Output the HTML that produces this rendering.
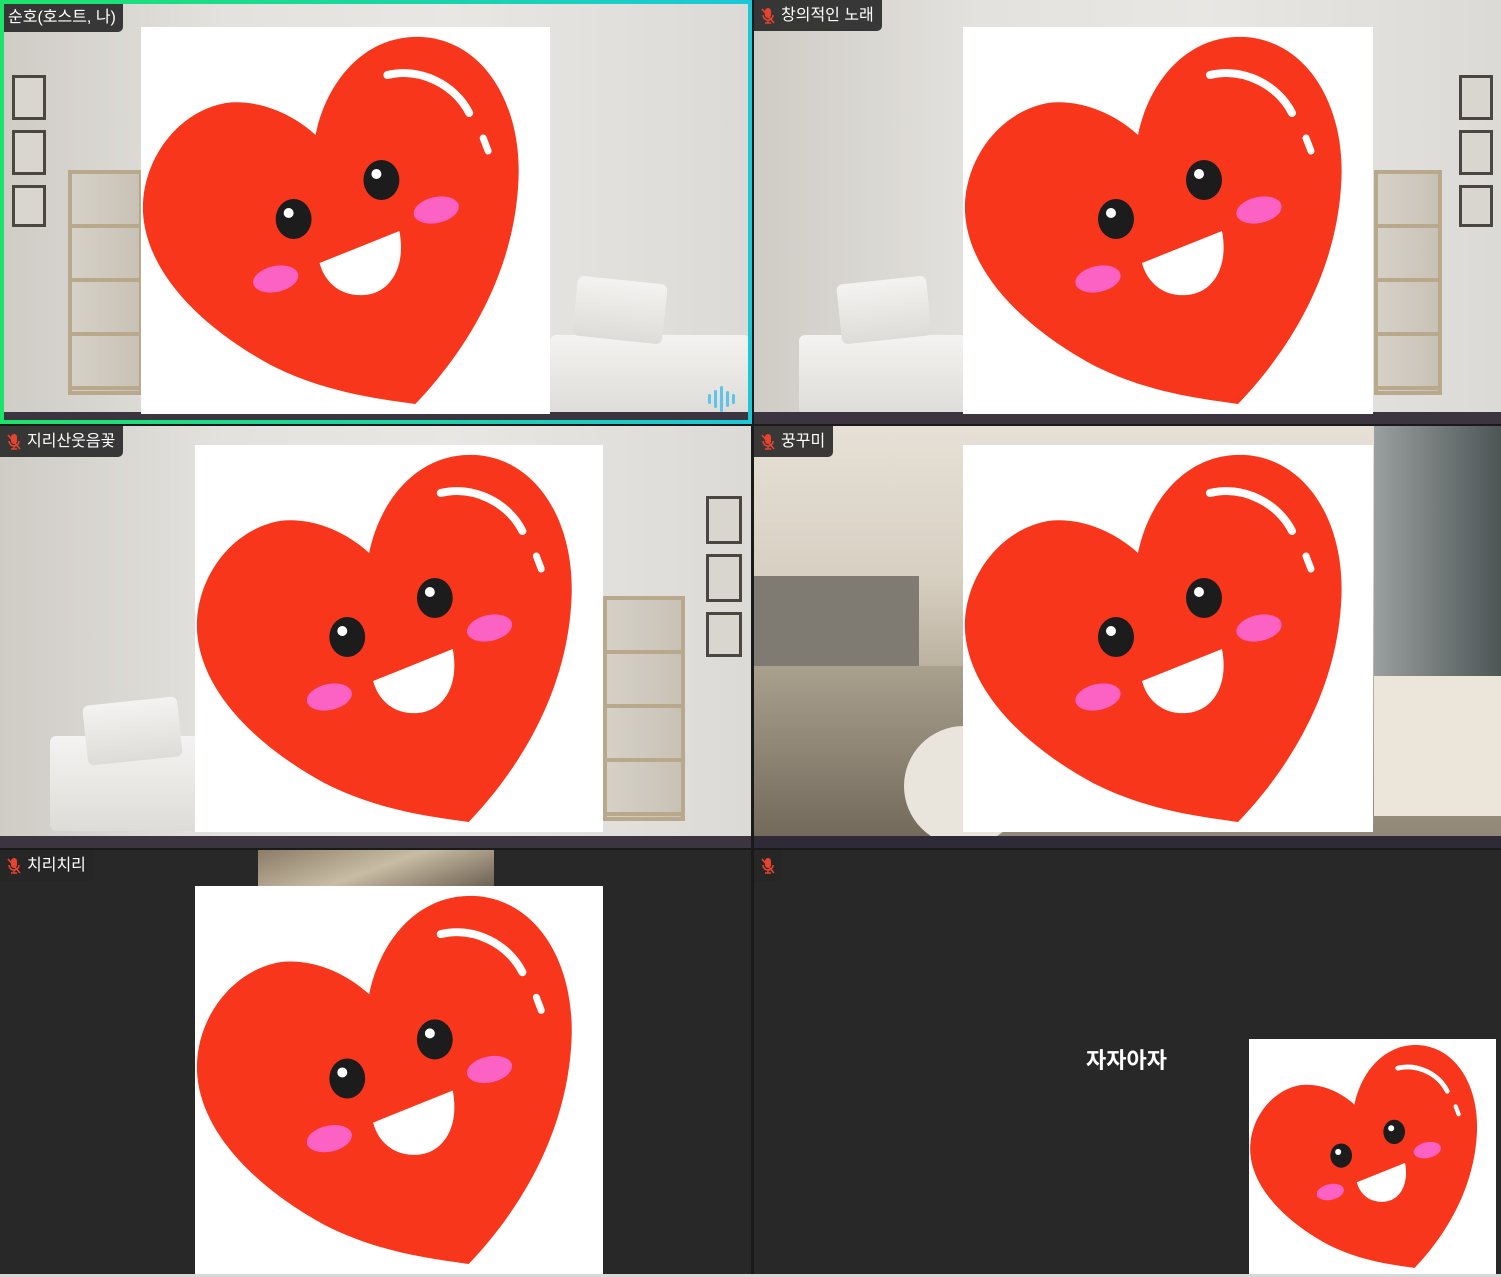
<!DOCTYPE html>
<html><head><meta charset="utf-8">
<style>
*{margin:0;padding:0;box-sizing:border-box}
body{width:1501px;height:1277px;background:#1a1a1a;position:relative;overflow:hidden;font-family:"Liberation Sans","Noto Sans CJK KR",sans-serif}
.t{position:absolute;overflow:hidden}
.room{background:linear-gradient(90deg,#cfccc6 0%,#e4e2de 30%,#e8e7e4 60%,#dcdad6 100%)}
.dark{background:#282828}
.lbl{position:absolute;left:0;top:0;height:31px;background:rgba(38,38,38,.9);color:#fff;font-size:16px;line-height:31px;padding:0 8px 0 6px;border-bottom-right-radius:5px;z-index:5;display:flex;align-items:center;gap:5px;white-space:nowrap}
.hb{position:absolute;background:#fff;z-index:3}
.hb svg{display:block;width:100%;height:100%}
.sofa{position:absolute;background:linear-gradient(180deg,#f4f3f1,#dedcd8);border-radius:6px;z-index:1}
.shelf{position:absolute;border:4px solid #b9a98c;background:repeating-linear-gradient(180deg,transparent 0 50px,#b9a98c 50px 54px),linear-gradient(90deg,#d6d1c8,#c8c2b6);z-index:1}
.fr{position:absolute;border:3px solid #4b4640;background:#d9d6d0;z-index:1}
.floor{position:absolute;left:0;right:0;bottom:0;height:12px;background:#3c3540;z-index:1}
</style></head><body>

<!-- tile 1 -->
<div class="t room" style="left:0;top:0;width:752px;height:424px">
 <div class="fr" style="left:12px;top:75px;width:34px;height:45px"></div>
 <div class="fr" style="left:12px;top:130px;width:34px;height:45px"></div>
 <div class="fr" style="left:12px;top:185px;width:34px;height:42px"></div>
 <div class="shelf" style="left:68px;top:170px;width:75px;height:225px"></div>
 <div class="sofa" style="left:550px;top:335px;width:200px;height:80px"></div>
 <div class="sofa" style="left:575px;top:280px;width:90px;height:60px;transform:rotate(6deg)"></div>
 <div class="floor"></div>
</div>
<div style="position:absolute;left:0;top:0;width:752px;height:424px;border:4px solid;border-image:linear-gradient(90deg,#1de36a,#1cc8d8) 1;z-index:6"></div>
<div class="lbl" style="left:4px;top:4px;height:28px;line-height:28px;padding:0 7px 0 4px">순호(호스트, 나)</div>
<div style="position:absolute;left:708px;top:386px;z-index:7;display:flex;gap:3px;align-items:center">
<i style="width:3px;height:10px;background:#5ec4e8;border-radius:2px"></i><i style="width:3px;height:18px;background:#5ec4e8;border-radius:2px"></i><i style="width:3px;height:26px;background:#5ec4e8;border-radius:2px"></i><i style="width:3px;height:16px;background:#5ec4e8;border-radius:2px"></i><i style="width:3px;height:10px;background:#5ec4e8;border-radius:2px"></i></div>

<!-- tile 2 -->
<div class="t room" style="left:754px;top:0;width:747px;height:424px">
 <div class="sofa" style="left:45px;top:335px;width:180px;height:80px"></div>
 <div class="sofa" style="left:85px;top:280px;width:90px;height:60px;transform:rotate(-6deg)"></div>
 <div class="shelf" style="left:620px;top:170px;width:68px;height:225px"></div>
 <div class="fr" style="left:705px;top:75px;width:34px;height:45px"></div>
 <div class="fr" style="left:705px;top:130px;width:34px;height:45px"></div>
 <div class="fr" style="left:705px;top:185px;width:34px;height:42px"></div>
 <div class="floor"></div>
</div>
<!-- tile 3 -->
<div class="t room" style="left:0;top:426px;width:751px;height:422px">
 <div class="sofa" style="left:50px;top:310px;width:150px;height:95px"></div>
 <div class="sofa" style="left:85px;top:275px;width:95px;height:60px;transform:rotate(-6deg)"></div>
 <div class="shelf" style="left:603px;top:170px;width:82px;height:225px"></div>
 <div class="fr" style="left:706px;top:70px;width:36px;height:48px"></div>
 <div class="fr" style="left:706px;top:128px;width:36px;height:48px"></div>
 <div class="fr" style="left:706px;top:186px;width:36px;height:45px"></div>
 <div class="floor"></div>
</div>
<!-- tile 4 -->
<div class="t" style="left:754px;top:426px;width:747px;height:422px;background:linear-gradient(180deg,#e6e0d6 0%,#d8d0c2 35%,#b9ae9c 60%,#8f8574 100%)">
 <div style="position:absolute;left:0;top:150px;width:165px;height:110px;background:#7f7a72"></div>
 <div style="position:absolute;left:0;top:240px;width:210px;height:182px;background:linear-gradient(180deg,#a9a08e,#6f6658)"></div>
 <div style="position:absolute;left:620px;top:0;width:127px;height:260px;background:linear-gradient(90deg,#9aa0a0,#4e5556)"></div>
 <div style="position:absolute;left:620px;top:250px;width:127px;height:140px;background:#ece6da"></div>
 <div style="position:absolute;left:150px;top:300px;width:120px;height:120px;background:#eae5dc;border-radius:50%"></div>
 <div class="floor" style="background:#2e2a38"></div>
</div>
<!-- tile 5 -->
<div class="t dark" style="left:0;top:850px;width:751px;height:424px"></div>
<div class="t" style="left:258px;top:850px;width:236px;height:37px;background:linear-gradient(160deg,#8a7c66,#c9bca4 50%,#6b5f50)"></div>
<!-- tile 6 -->
<div class="t dark" style="left:754px;top:850px;width:747px;height:424px"></div>
<div style="position:absolute;left:1086px;top:1043px;color:#fff;font-size:22px;font-weight:bold">자자아자</div>
<div style="position:absolute;left:0;top:1274px;width:1501px;height:3px;background:#d8d8d8"></div>

<!-- labels -->
<div class="lbl" style="left:754px"><svg width="16" height="18" viewBox="0 0 16 18"><rect x="5" y="1" width="6" height="10" rx="3" fill="#e8432e"/><path d="M3 8a5 5 0 0 0 10 0M8 13v3M5 16h6" stroke="#e8432e" stroke-width="1.5" fill="none"/><path d="M2 2L14 16" stroke="#e8432e" stroke-width="1.6"/></svg>창의적인 노래</div>
<div class="lbl" style="top:426px"><svg width="16" height="18" viewBox="0 0 16 18"><rect x="5" y="1" width="6" height="10" rx="3" fill="#e8432e"/><path d="M3 8a5 5 0 0 0 10 0M8 13v3M5 16h6" stroke="#e8432e" stroke-width="1.5" fill="none"/><path d="M2 2L14 16" stroke="#e8432e" stroke-width="1.6"/></svg>지리산웃음꽃</div>
<div class="lbl" style="left:754px;top:426px"><svg width="16" height="18" viewBox="0 0 16 18"><rect x="5" y="1" width="6" height="10" rx="3" fill="#e8432e"/><path d="M3 8a5 5 0 0 0 10 0M8 13v3M5 16h6" stroke="#e8432e" stroke-width="1.5" fill="none"/><path d="M2 2L14 16" stroke="#e8432e" stroke-width="1.6"/></svg>꿍꾸미</div>
<div class="lbl" style="top:850px"><svg width="16" height="18" viewBox="0 0 16 18"><rect x="5" y="1" width="6" height="10" rx="3" fill="#e8432e"/><path d="M3 8a5 5 0 0 0 10 0M8 13v3M5 16h6" stroke="#e8432e" stroke-width="1.5" fill="none"/><path d="M2 2L14 16" stroke="#e8432e" stroke-width="1.6"/></svg>치리치리</div>
<div class="lbl" style="left:754px;top:850px;padding:0 6px"><svg width="16" height="18" viewBox="0 0 16 18"><rect x="5" y="1" width="6" height="10" rx="3" fill="#e8432e"/><path d="M3 8a5 5 0 0 0 10 0M8 13v3M5 16h6" stroke="#e8432e" stroke-width="1.5" fill="none"/><path d="M2 2L14 16" stroke="#e8432e" stroke-width="1.6"/></svg></div>

<!-- hearts -->
<div class="hb" style="left:141px;top:27px;width:409px;height:387px"><svg viewBox="0 0 410 387" preserveAspectRatio="none"><path d="M175,108 C150,85 115,72 85,76 C35,85 0,135 2,185 C5,245 60,300 130,338 C185,366 240,372 275,377 C325,325 372,250 378,160 C384,80 345,14 282,10 C222,7 185,58 175,108 Z" fill="#f8361b"/><path d="M247,48 C280,40 315,58 329,86" stroke="#fff" stroke-width="8" stroke-linecap="round" fill="none"/><path d="M343,111 L348,124" stroke="#fff" stroke-width="7" stroke-linecap="round"/><ellipse cx="153" cy="192" rx="18" ry="20" fill="#1c1c1c"/><circle cx="148" cy="186" r="5" fill="#fff"/><ellipse cx="241" cy="153" rx="18" ry="20" fill="#1c1c1c"/><circle cx="236" cy="147" r="5" fill="#fff"/><ellipse cx="135" cy="252" rx="23" ry="13" transform="rotate(-12 135 252)" fill="#fb62c4"/><ellipse cx="296" cy="183" rx="23" ry="13" transform="rotate(-12 296 183)" fill="#fb62c4"/><path d="M179,236 L259,204 C266,240 250,266 224,268 C200,270 184,255 179,236 Z" fill="#fff"/></svg></div>
<div class="hb" style="left:963px;top:27px;width:410px;height:387px"><svg viewBox="0 0 410 387" preserveAspectRatio="none"><path d="M175,108 C150,85 115,72 85,76 C35,85 0,135 2,185 C5,245 60,300 130,338 C185,366 240,372 275,377 C325,325 372,250 378,160 C384,80 345,14 282,10 C222,7 185,58 175,108 Z" fill="#f8361b"/><path d="M247,48 C280,40 315,58 329,86" stroke="#fff" stroke-width="8" stroke-linecap="round" fill="none"/><path d="M343,111 L348,124" stroke="#fff" stroke-width="7" stroke-linecap="round"/><ellipse cx="153" cy="192" rx="18" ry="20" fill="#1c1c1c"/><circle cx="148" cy="186" r="5" fill="#fff"/><ellipse cx="241" cy="153" rx="18" ry="20" fill="#1c1c1c"/><circle cx="236" cy="147" r="5" fill="#fff"/><ellipse cx="135" cy="252" rx="23" ry="13" transform="rotate(-12 135 252)" fill="#fb62c4"/><ellipse cx="296" cy="183" rx="23" ry="13" transform="rotate(-12 296 183)" fill="#fb62c4"/><path d="M179,236 L259,204 C266,240 250,266 224,268 C200,270 184,255 179,236 Z" fill="#fff"/></svg></div>
<div class="hb" style="left:195px;top:445px;width:408px;height:387px"><svg viewBox="0 0 410 387" preserveAspectRatio="none"><path d="M175,108 C150,85 115,72 85,76 C35,85 0,135 2,185 C5,245 60,300 130,338 C185,366 240,372 275,377 C325,325 372,250 378,160 C384,80 345,14 282,10 C222,7 185,58 175,108 Z" fill="#f8361b"/><path d="M247,48 C280,40 315,58 329,86" stroke="#fff" stroke-width="8" stroke-linecap="round" fill="none"/><path d="M343,111 L348,124" stroke="#fff" stroke-width="7" stroke-linecap="round"/><ellipse cx="153" cy="192" rx="18" ry="20" fill="#1c1c1c"/><circle cx="148" cy="186" r="5" fill="#fff"/><ellipse cx="241" cy="153" rx="18" ry="20" fill="#1c1c1c"/><circle cx="236" cy="147" r="5" fill="#fff"/><ellipse cx="135" cy="252" rx="23" ry="13" transform="rotate(-12 135 252)" fill="#fb62c4"/><ellipse cx="296" cy="183" rx="23" ry="13" transform="rotate(-12 296 183)" fill="#fb62c4"/><path d="M179,236 L259,204 C266,240 250,266 224,268 C200,270 184,255 179,236 Z" fill="#fff"/></svg></div>
<div class="hb" style="left:963px;top:445px;width:410px;height:387px"><svg viewBox="0 0 410 387" preserveAspectRatio="none"><path d="M175,108 C150,85 115,72 85,76 C35,85 0,135 2,185 C5,245 60,300 130,338 C185,366 240,372 275,377 C325,325 372,250 378,160 C384,80 345,14 282,10 C222,7 185,58 175,108 Z" fill="#f8361b"/><path d="M247,48 C280,40 315,58 329,86" stroke="#fff" stroke-width="8" stroke-linecap="round" fill="none"/><path d="M343,111 L348,124" stroke="#fff" stroke-width="7" stroke-linecap="round"/><ellipse cx="153" cy="192" rx="18" ry="20" fill="#1c1c1c"/><circle cx="148" cy="186" r="5" fill="#fff"/><ellipse cx="241" cy="153" rx="18" ry="20" fill="#1c1c1c"/><circle cx="236" cy="147" r="5" fill="#fff"/><ellipse cx="135" cy="252" rx="23" ry="13" transform="rotate(-12 135 252)" fill="#fb62c4"/><ellipse cx="296" cy="183" rx="23" ry="13" transform="rotate(-12 296 183)" fill="#fb62c4"/><path d="M179,236 L259,204 C266,240 250,266 224,268 C200,270 184,255 179,236 Z" fill="#fff"/></svg></div>
<div class="hb" style="left:195px;top:886px;width:408px;height:388px"><svg viewBox="0 0 410 387" preserveAspectRatio="none"><path d="M175,108 C150,85 115,72 85,76 C35,85 0,135 2,185 C5,245 60,300 130,338 C185,366 240,372 275,377 C325,325 372,250 378,160 C384,80 345,14 282,10 C222,7 185,58 175,108 Z" fill="#f8361b"/><path d="M247,48 C280,40 315,58 329,86" stroke="#fff" stroke-width="8" stroke-linecap="round" fill="none"/><path d="M343,111 L348,124" stroke="#fff" stroke-width="7" stroke-linecap="round"/><ellipse cx="153" cy="192" rx="18" ry="20" fill="#1c1c1c"/><circle cx="148" cy="186" r="5" fill="#fff"/><ellipse cx="241" cy="153" rx="18" ry="20" fill="#1c1c1c"/><circle cx="236" cy="147" r="5" fill="#fff"/><ellipse cx="135" cy="252" rx="23" ry="13" transform="rotate(-12 135 252)" fill="#fb62c4"/><ellipse cx="296" cy="183" rx="23" ry="13" transform="rotate(-12 296 183)" fill="#fb62c4"/><path d="M179,236 L259,204 C266,240 250,266 224,268 C200,270 184,255 179,236 Z" fill="#fff"/></svg></div>
<div class="hb" style="left:1249px;top:1039px;width:247px;height:235px"><svg viewBox="0 0 410 387" preserveAspectRatio="none"><path d="M175,108 C150,85 115,72 85,76 C35,85 0,135 2,185 C5,245 60,300 130,338 C185,366 240,372 275,377 C325,325 372,250 378,160 C384,80 345,14 282,10 C222,7 185,58 175,108 Z" fill="#f8361b"/><path d="M247,48 C280,40 315,58 329,86" stroke="#fff" stroke-width="8" stroke-linecap="round" fill="none"/><path d="M343,111 L348,124" stroke="#fff" stroke-width="7" stroke-linecap="round"/><ellipse cx="153" cy="192" rx="18" ry="20" fill="#1c1c1c"/><circle cx="148" cy="186" r="5" fill="#fff"/><ellipse cx="241" cy="153" rx="18" ry="20" fill="#1c1c1c"/><circle cx="236" cy="147" r="5" fill="#fff"/><ellipse cx="135" cy="252" rx="23" ry="13" transform="rotate(-12 135 252)" fill="#fb62c4"/><ellipse cx="296" cy="183" rx="23" ry="13" transform="rotate(-12 296 183)" fill="#fb62c4"/><path d="M179,236 L259,204 C266,240 250,266 224,268 C200,270 184,255 179,236 Z" fill="#fff"/></svg></div>
</body></html>
